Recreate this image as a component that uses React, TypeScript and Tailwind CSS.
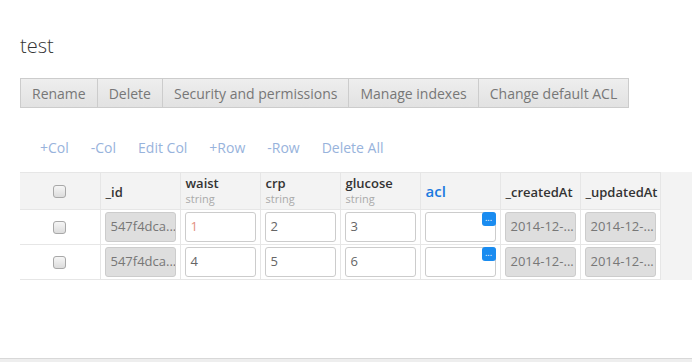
import React from "react";

const BUTTONS = ["Rename", "Delete", "Security and permissions", "Manage indexes", "Change default ACL"];
const ACTIONS = ["+Col", "-Col", "Edit Col", "+Row", "-Row", "Delete All"];

const COLUMNS: { name: string; type?: string; kind?: "acl" }[] = [
  { name: "_id" },
  { name: "waist", type: "string" },
  { name: "crp", type: "string" },
  { name: "glucose", type: "string" },
  { name: "acl", kind: "acl" },
  { name: "_createdAt" },
  { name: "_updatedAt" },
];

const ROWS = [
  { values: ["1", "2", "3"], first: "text-[#e3907f]" },
  { values: ["4", "5", "6"], first: "text-[#666]" },
];

function Checkbox() {
  return (
    <div className="mx-auto h-[13px] w-[13px] rounded-[3px] border border-[#a8a8a8] bg-gradient-to-b from-[#f6f6f6] to-[#dcdcdc]" />
  );
}

function ReadOnly({ text }: { text: string }) {
  return (
    <div className="flex h-[30px] w-[71px] items-center overflow-hidden whitespace-nowrap rounded-[3px] border border-[#cccccc] bg-[#dedede] px-[5px] text-[13px] text-[#777]">
      {text}
    </div>
  );
}

function Editable({ text, color = "text-[#666]" }: { text: string; color?: string }) {
  return (
    <div className={`flex h-[30px] w-[71px] items-center rounded-[3px] border border-[#cccccc] bg-white px-[5px] text-[13px] ${color}`}>
      {text}
    </div>
  );
}

function AclCell() {
  return (
    <div className="relative h-[30px] w-[71px] rounded-[3px] border border-[#cccccc] bg-white">
      <div className="absolute -right-px -top-px flex h-[14px] w-[14px] items-center justify-center rounded-[3px] bg-[#1a8cf0] text-[9px] leading-none text-white">
        <span className="-mt-[3px]">...</span>
      </div>
    </div>
  );
}

const cell = "overflow-hidden border-r border-[#e6e6e6] py-0 pl-[4px] pr-0";

export default function App() {
  return (
    <div
      className="flex h-[362px] w-[692px] flex-col overflow-hidden bg-white text-[#333]"
      style={{ fontFamily: '"Open Sans", "Liberation Sans", sans-serif' }}
    >
      <div className="flex-1">
        <h1 className="ml-5 mt-[33px] text-[20px] font-light leading-[26px] text-[#333]">test</h1>

        <div className="ml-5 mt-[19px] flex">
          {BUTTONS.map((label, i) => (
            <div
              key={label}
              className={`flex h-[30px] items-center whitespace-nowrap border border-[#cccccc] bg-gradient-to-b from-[#eeeeee] to-[#e2e2e2] px-[11px] text-[14px] text-[#777] ${
                i > 0 ? "-ml-px" : ""
              }`}
            >
              {label}
            </div>
          ))}
        </div>

        <div className="ml-10 mt-[29px] flex gap-[22px] text-[14px] leading-[22px] text-[#98b3dc]">
          {ACTIONS.map((a) => (
            <span key={a}>{a}</span>
          ))}
        </div>

        <div className="ml-5 mt-[13px] h-[108px] bg-[#f3f3f3]">
          <table className="w-[640px] table-fixed border-collapse">
            <colgroup>
              {Array.from({ length: 8 }).map((_, i) => (
                <col key={i} className="w-20" />
              ))}
            </colgroup>
            <thead>
              <tr className="h-[37px] border-t border-[#e6e6e6] bg-[#f3f3f3]">
                <th className="border-r border-[#e6e6e6] p-0">
                  <Checkbox />
                </th>
                {COLUMNS.map((c) => (
                  <th
                    key={c.name}
                    className="overflow-hidden whitespace-nowrap border-r border-[#e6e6e6] px-[5px] py-0 text-left align-middle font-semibold"
                  >
                    {c.type ? (
                      <div className="flex flex-col pb-[1px]">
                        <span className="text-[13px] leading-[17px] text-[#333]">{c.name}</span>
                        <span className="text-[11px] font-normal leading-[14px] text-[#aaa]">{c.type}</span>
                      </div>
                    ) : c.kind === "acl" ? (
                      <span className="text-[15px] text-[#1a7ae0]">{c.name}</span>
                    ) : (
                      <span className="text-[13px] text-[#333]">{c.name}</span>
                    )}
                  </th>
                ))}
              </tr>
            </thead>
            <tbody>
              {ROWS.map((r, ri) => (
                <tr key={ri} className="h-[35px] border-t border-b border-[#e6e6e6] bg-white">
                  <td className="border-r border-[#e6e6e6] p-0">
                    <Checkbox />
                  </td>
                  <td className={cell}>
                    <ReadOnly text="547f4dca..." />
                  </td>
                  {r.values.map((v, vi) => (
                    <td key={vi} className={cell}>
                      <Editable text={v} color={vi === 0 ? r.first : "text-[#666]"} />
                    </td>
                  ))}
                  <td className={cell}>
                    <AclCell />
                  </td>
                  <td className={cell}>
                    <ReadOnly text="2014-12-..." />
                  </td>
                  <td className={cell}>
                    <ReadOnly text="2014-12-..." />
                  </td>
                </tr>
              ))}
            </tbody>
          </table>
        </div>
      </div>
      <div className="h-[4px] border-t border-[#d8d8d8] bg-[#eeeeee]" />
    </div>
  );
}
